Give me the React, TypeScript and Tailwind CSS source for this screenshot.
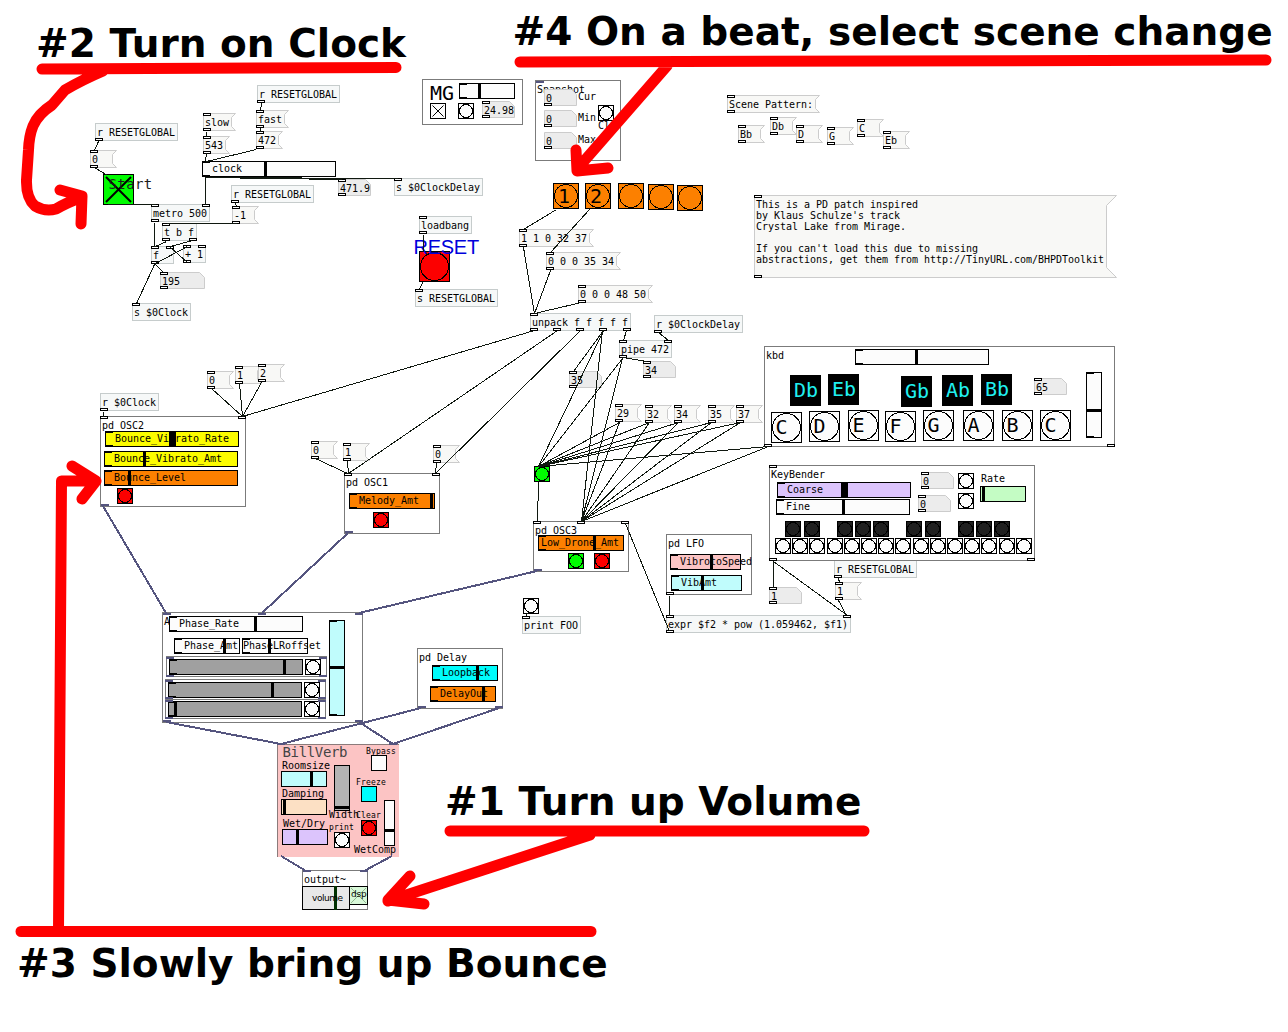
import React from "react";

const SIZES = {
  s: { cls: "text-[8px] leading-[9px] tracking-[0.18px]", up: 7 },
  m: { cls: "text-[10px] leading-[11px] tracking-[-0.02px]", up: 9 },
  l: { cls: "text-[14px] leading-[16px] tracking-[0.4px]", up: 13 },
  lt: { cls: "text-[14px] leading-[16px] tracking-[-0.35px]", up: 13 },
  xl: { cls: "text-[20px] leading-[24px]", up: 19 },
};

type Size = keyof typeof SIZES;

/* Free comment on the patch canvas, placed by its baseline. */
function Txt({ x, y, t, size = "m", color = "text-black" }: { x: number; y: number; t: string; size?: Size; color?: string }) {
  const s = SIZES[size];
  return (
    <span className={`absolute whitespace-pre ${s.cls} ${color}`} style={{ left: x, top: y - s.up }}>
      {t}
    </span>
  );
}

/* Default 10px label that sits in the flow of its box. */
function Label({ t }: { t: string }) {
  return <span className="relative text-[10px] leading-[11px] tracking-[-0.02px] whitespace-pre text-black">{t}</span>;
}

function Heading({ x, y, t }: { x: number; y: number; t: string }) {
  return (
    <h2
      className="absolute flex gap-[13.57px] font-['DejaVu_Sans',sans-serif] text-[39px] leading-[45px] font-bold whitespace-pre text-black"
      style={{ left: x, top: y - 36 }}
    >
      {t.split(" ").map((word, i) => <span key={i}>{word}</span>)}
    </h2>
  );
}

function Port({ x, y }: { x: number; y: number }) {
  return <i className="absolute h-[3px] w-2 border border-black bg-white" style={{ left: x, top: y }} />;
}

function SigPort({ x, y }: { x: number; y: number }) {
  return <i className="absolute h-[2px] w-2 bg-[#55557f]" style={{ left: x, top: y }} />;
}

type BoxDef = [x: number, y: number, text: string, ins?: number[], outs?: number[]];

function Obj({ d: [x, y, t, ins = [], outs = []] }: { d: BoxDef }) {
  return (
    <div
      className="absolute flex h-[18px] min-w-[23px] items-start border border-[#c6cccc] bg-[#f6f8f8] pt-[3px] pr-0.5 pl-px"
      style={{ left: x, top: y }}
    >
      {ins.map((p) => <Port key={`i${p}`} x={p - x - 1} y={-1} />)}
      {outs.map((p) => <Port key={`o${p}`} x={p - x - 1} y={14} />)}
      <Label t={t} />
    </div>
  );
}

function Msg({ x, y, t, w, h = 17, flag = 4 }: { x: number; y: number; t: string; w?: number; h?: number; flag?: number }) {
  const iw = w ?? Math.max(t.length * 6, 18) + 4;
  return (
    <div className="absolute flex items-start pt-1 pl-0.5" style={{ left: x, top: y }}>
      <svg className="absolute top-0 left-0" width={iw + flag + 1} height={h + 1}>
        <path
          d={`M.5 .5H${iw + flag + 0.5}L${iw + 0.5} ${flag + 0.5}V${h - flag + 0.5}L${iw + flag + 0.5} ${h + 0.5}H.5Z`}
          fill="#f8f8f6"
          stroke="#cccccc"
        />
      </svg>
      <Port x={0} y={0} />
      <Port x={0} y={h - 2} />
      <Label t={t} />
    </div>
  );
}

function Num({ x, y, t, w = 32, top = true }: { x: number; y: number; t: string; w?: number; top?: boolean }) {
  return (
    <div className="absolute flex items-start pt-1 pl-0.5" style={{ left: x, top: y }}>
      <svg className="absolute top-0 left-0" width={w + 1} height={17}>
        <path d={`M.5 .5H${w - 4.5}L${w + 0.5} 5.5V16.5H.5Z`} fill="#ececec" stroke="#cccccc" />
      </svg>
      {top && <Port x={0} y={0} />}
      <Port x={0} y={14} />
      <Label t={t} />
    </div>
  );
}

/* Slider; `k` is the knob's offset from the slider's own edge. In flow when it has no position. */
function Slider({ x, y, w, h = 16, k, kw = 3, bg = "bg-[#fcfcfc]", label, pad = "pl-[9px]", cls = "", marks = true, vertical = false }: {
  x?: number; y?: number; w: number; h?: number; k: number; kw?: number; bg?: string; label?: string; pad?: string; cls?: string; marks?: boolean; vertical?: boolean;
}) {
  const free = x !== undefined;
  return (
    <div
      className={`${free ? "absolute" : "relative"} flex shrink-0 items-start border border-black pt-px ${pad} ${bg} ${cls}`}
      style={free ? { left: x, top: y, width: w, height: h } : { width: w, height: h }}
    >
      {marks && <i className="absolute -top-px -left-px h-[2px] w-2 bg-black" />}
      {marks && <i className="absolute -bottom-px -left-px h-[2px] w-2 bg-black" />}
      {label && <Label t={label} />}
      <i
        className="absolute bg-black"
        style={vertical ? { left: -1, top: k - 1, width: w, height: kw } : { left: k - 1, top: -1, width: kw, height: h }}
      />
    </div>
  );
}

/* Bang button: in flow when it has no position of its own. */
function Bang({ x, y, s = 16, fill = "#fcfcfc", cls = "" }: { x?: number; y?: number; s?: number; fill?: string; cls?: string }) {
  const free = x !== undefined;
  return (
    <svg className={`${free ? "absolute" : "shrink-0"} ${cls}`} style={free ? { left: x, top: y } : undefined} width={s} height={s} shapeRendering="crispEdges">
      <rect x=".5" y=".5" width={s - 1} height={s - 1} fill={fill} stroke="#000" />
      <circle cx={s / 2} cy={s / 2} r={s / 2 - 1.5} fill={fill} stroke="#000" />
    </svg>
  );
}

function Toggle({ x, y, s, fill, sw = 1 }: { x: number; y: number; s: number; fill: string; sw?: number }) {
  const a = 2 + sw / 2;
  const b = s - a;
  return (
    <svg className="absolute" style={{ left: x, top: y }} width={s} height={s}>
      <rect x=".5" y=".5" width={s - 1} height={s - 1} fill={fill} stroke="#000" />
      <path d={`M${a} ${a}L${b} ${b}M${b} ${a}L${a} ${b}`} stroke="#000" strokeWidth={sw} />
    </svg>
  );
}

/* Graph-on-parent frame: a titled column of controls. */
function Gop({ x, y, w, h, title, children }: { x: number; y: number; w: number; h: number; title?: string; children?: React.ReactNode }) {
  return (
    <section
      className="absolute flex flex-col items-start border border-[#7b7b7b] bg-white pt-[3px] pl-px"
      style={{ left: x, top: y, width: w, height: h }}
    >
      {title && <Label t={title} />}
      {children}
    </section>
  );
}

/* Row frame with a gray slider and a bang. */
function FaderRow({ x, y, h = 21, k, pt = "pt-0.5" }: { x: number; y: number; h?: number; k: number; pt?: string }) {
  return (
    <section className={`absolute flex w-[161px] items-start gap-0.5 border border-[#7b7b7b] bg-white pl-0.5 ${pt}`} style={{ left: x, top: y, height: h }}>
      <Slider w={134} k={k} bg="bg-[#a0a0a0]" />
      <Bang />
    </section>
  );
}

const OBJECTS: BoxDef[] = [
  [95, 123, "r RESETGLOBAL", [], [95]],
  [257, 85, "r RESETGLOBAL", [], [257]],
  [231, 185, "r RESETGLOBAL", [], [231]],
  [151, 204, "metro 500", [151, 202], [151]],
  [162, 223, "t b f", [162], [162, 189]],
  [151, 246, "f", [151, 166], [151]],
  [183, 245, "+ 1", [183, 198], [183]],
  [132, 303, "s $0Clock", [132]],
  [394, 178, "s $0ClockDelay", [394]],
  [419, 216, "loadbang", [419], [419]],
  [415, 289, "s RESETGLOBAL", [415]],
  [530, 313, "unpack f f f f f", [530], [530, 553, 576, 599, 623]],
  [654, 315, "r $0ClockDelay", [], [654]],
  [619, 340, "pipe 472", [619, 664], [619]],
  [100, 393, "r $0Clock", [], [100]],
  [522, 616, "print FOO", [522]],
  [666, 615, "expr $f2 * pow (1.059462, $f1)", [666, 843], [666]],
];

const MESSAGES: [number, number, string][] = [
  [203, 113, "slow"], [203, 136, "543"], [256, 110, "fast"], [256, 131, "472"], [90, 150, "0"], [232, 206, "-1"],
  [519, 229, "1 1 0 32 37"], [546, 252, "0 0 0 35 34"], [578, 285, "0 0 0 48 50"],
  [727, 95, "Scene Pattern:"], [738, 125, "Bb"], [770, 117, "Db"], [796, 125, "D"], [827, 127, "G"], [857, 119, "C"], [883, 131, "Eb"],
  [207, 371, "0"], [235, 366, "1"], [258, 364, "2"], [311, 441, "0"], [343, 443, "1"], [433, 445, "0"],
  [615, 404, "29"], [645, 405, "32"], [674, 405, "34"], [708, 405, "35"], [736, 405, "37"], [835, 582, "1"],
];

const NOTE = [
  "This is a PD patch inspired",
  "by Klaus Schulze's track",
  "Crystal Lake from Mirage.",
  "",
  "If you can't load this due to missing",
  "abstractions, get them from http://TinyURL.com/BHPDToolkit",
].join("\n");

type Line = [number, number, number, number];

const WIRES: Line[] = [
  [98, 141, 94, 150], [94, 167, 107, 175], [107, 204, 155, 204], [154, 222, 154, 246], [205, 177, 205, 204],
  [235, 203, 236, 206], [236, 223, 166, 223], [166, 241, 155, 246], [192, 240, 170, 246], [155, 263, 187, 246],
  [187, 262, 170, 247], [155, 264, 163, 272], [154, 264, 136, 303], [206, 131, 206, 136], [206, 153, 205, 161],
  [261, 103, 260, 110], [260, 127, 260, 131], [256, 149, 206, 161], [205, 177, 342, 179], [205, 177, 398, 178],
  [423, 234, 423, 251], [422, 282, 419, 289], [556, 209, 523, 229], [589, 209, 550, 252], [523, 247, 534, 313],
  [550, 270, 534, 313], [581, 302, 534, 313], [534, 330, 242, 416], [557, 330, 348, 473], [580, 330, 435, 473],
  [603, 330, 573, 371], [603, 330, 538, 466], [602, 330, 581, 521], [626, 330, 623, 340], [658, 332, 668, 340],
  [622, 358, 538, 466], [622, 358, 581, 521], [622, 357, 647, 361],
  [619, 422, 538, 466], [649, 422, 538, 466], [678, 422, 538, 466], [711, 422, 538, 466], [740, 422, 538, 466], [768, 446, 538, 466],
  [619, 422, 581, 521], [649, 422, 581, 521], [678, 422, 581, 521], [711, 422, 581, 521], [740, 422, 581, 521], [768, 446, 581, 521],
  [538, 482, 537, 521], [625, 523, 669, 631], [527, 613, 525, 616], [669, 595, 669, 615], [773, 561, 773, 587],
  [773, 561, 847, 615], [838, 578, 839, 582], [838, 600, 846, 615], [103, 411, 103, 416], [211, 388, 242, 416],
  [239, 383, 242, 416], [261, 382, 242, 416], [315, 458, 347, 473], [347, 461, 348, 473], [436, 463, 435, 473],
];

const SIGNALS: Line[] = [
  [103, 506, 166, 613], [348, 533, 262, 613], [537, 571, 359, 613], [166, 722, 281, 744], [359, 722, 393, 744],
  [421, 708, 281, 744], [499, 708, 393, 744], [281, 856, 306, 871], [392, 856, 364, 871],
];

const SIG_PORTS: [number, number][] = [
  [536, 81], [101, 504], [345, 531], [534, 569], [163, 613], [258, 613], [355, 613], [163, 720], [355, 720],
  [418, 706], [495, 706], [277, 743], [389, 743], [303, 870], [360, 870],
  [166, 657], [319, 657], [166, 675], [319, 675], [165, 680], [318, 680], [165, 697], [318, 697], [165, 700], [318, 700], [165, 717], [318, 717],
];

const PORTS: [number, number][] = [
  [100, 416], [238, 416], [344, 473], [432, 473], [533, 521], [577, 521], [621, 521], [666, 592],
  [764, 444], [1107, 444], [769, 465], [769, 558], [1027, 558],
];

const SCENES: [number, number, string][] = [[553, 183, "1"], [585, 183, "2"], [618, 183, ""], [648, 184, ""], [677, 185, ""]];

const BLACK_KEYS: [number, number, string][] = [[790, 375, "Db"], [828, 374, "Eb"], [901, 376, "Gb"], [942, 375, "Ab"], [981, 374, "Bb"]];
const WHITE_KEYS: [number, number, string][] = [
  [771, 412, "C"], [809, 411, "D"], [848, 410, "E"], [885, 411, "F"], [923, 410, "G"], [963, 410, "A"], [1002, 410, "B"], [1040, 410, "C"],
];

const ORANGE = "bg-[#fc8000]";
const YELLOW = "bg-[#fcfc00]";
const ICE = "bg-[#c0fcfc]";
const LILAC = "bg-[#dcc4fc]";

/* Two octaves of small pitch-bend keys. */
function BendKeys() {
  return (
    <div className="absolute top-[521px] left-[775px] flex w-[257px] flex-col gap-px">
      <div className="flex gap-[17px] pl-2.5">
        {[2, 3, 2, 3].map((n, g) => (
          <div key={g} className={n === 2 ? "flex gap-[3px]" : "flex gap-0.5"}>
            {Array.from({ length: n }, (_, i) => <Bang key={i} fill="#202020" />)}
          </div>
        ))}
      </div>
      <div className="flex justify-between">
        {Array.from({ length: 15 }, (_, i) => <Bang key={i} />)}
      </div>
    </div>
  );
}

function Monitors() {
  return (
    <>
      <Gop x={422} y={79} w={101} h={46} />
      <Txt x={430} y={100} t="MG" size="xl" />
      <Slider x={459} y={83} w={56} k={19} />
      <Toggle x={430} y={103} s={16} fill="#fcfcfc" />
      <Bang x={458} y={103} />
      <Num x={482} y={101} t="24.98" />

      <Gop x={535} y={80} w={86} h={81} title="Snapshot" />
      {[89, 110, 132].map((y) => <Num key={y} x={544} y={y} t="0" top={false} />)}
      <Txt x={578} y={100} t="Cur" />
      <Txt x={578} y={121} t="Min" />
      <Txt x={578} y={143} t="Max" />
      <Txt x={598} y={129} t="Clr" />
      <Bang x={598} y={105} />
    </>
  );
}

function Voices() {
  return (
    <>
      <Gop x={100} y={416} w={146} h={91} title="pd OSC2">
        <Slider w={134} k={64} kw={7} bg={YELLOW} label="Bounce_Vibrato_Rate" cls="ml-[3px]" />
        <Slider w={134} k={39} bg={YELLOW} label="Bounce_Vibrato_Amt" cls="mt-1 ml-0.5" />
        <Slider w={134} k={24} bg={ORANGE} label="Bounce_Level" cls="mt-[3px] ml-0.5" />
        <Bang fill="#fc0000" cls="mt-0.5 ml-[15px]" />
      </Gop>

      <Gop x={344} y={473} w={96} h={61} title="pd OSC1">
        <Slider w={86} k={81} bg={ORANGE} label="Melody_Amt" cls="mt-[5px] ml-[3px]" />
        <Bang fill="#fc0000" cls="mt-[3px] ml-[27px]" />
      </Gop>

      <Gop x={533} y={521} w={96} h={51} title="pd OSC3">
        <Slider w={86} k={55} bg={ORANGE} label="Low_Drone_Amt" pad="pl-0.5" cls="-mt-px ml-[3px]" />
        <div className="mt-0.5 ml-[33px] flex gap-2.5">
          <Bang fill="#00fc00" />
          <Bang fill="#fc0000" />
        </div>
      </Gop>

      <Gop x={666} y={534} w={86} h={61} title="pd LFO">
        <Slider w={71} k={40} bg="bg-[#fcc4c4]" label="VibrotoSpeed" cls="mt-[5px] ml-0.5" />
        <Slider w={71} k={30} bg={ICE} label="VibAmt" cls="mt-[5px] ml-[3px]" />
      </Gop>

      <Gop x={417} y={648} w={86} h={61} title="pd Delay">
        <Slider w={66} k={44} bg="bg-[#00fcfc]" label="Loopback" cls="mt-0.5 ml-[13px]" />
        <Slider w={66} k={52} bg={ORANGE} label="DelayOut" cls="mt-[5px] ml-[11px]" />
      </Gop>

      <Gop x={162} y={612} w={201} h={111} title="A" />
      <Slider x={169} y={616} w={134} k={85} label="Phase_Rate" />
      <Slider x={174} y={638} w={66} k={49} label="Phase_Amt" />
      <Slider x={242} y={638} w={66} k={26} label="PhaseLRoffset" pad="pl-0" />
      <Slider x={329} y={620} w={16} h={96} k={46} bg={ICE} vertical />
      <FaderRow x={166} y={656} k={114} />
      <FaderRow x={165} y={679} k={103} />
      <FaderRow x={165} y={699} h={20} k={6} pt="pt-px" />
    </>
  );
}

function Keyboards() {
  return (
    <>
      <Gop x={764} y={346} w={351} h={101} title="kbd" />
      <Slider x={855} y={349} w={134} k={60} />
      <Slider x={1086} y={372} w={16} h={66} k={37} vertical />
      <Num x={1034} y={378} t="65" />
      {BLACK_KEYS.map(([x, y, t]) => (
        <div key={x} className="absolute flex size-[31px] items-start bg-black pt-[3px] pl-1" style={{ left: x, top: y }}>
          <span className="text-[20px] leading-[24px] text-[#20f0f0]">{t}</span>
        </div>
      ))}
      {WHITE_KEYS.map(([x, y, t]) => (
        <div key={x} className="absolute flex size-[31px] items-start pt-[3px] pl-[4.5px]" style={{ left: x, top: y }}>
          <Bang x={0} y={0} s={31} />
          <span className="relative text-[20px] leading-[24px] text-black">{t}</span>
        </div>
      ))}

      <Obj d={[834, 560, "r RESETGLOBAL", [], [834]]} />
      <Gop x={769} y={465} w={266} h={96} title="KeyBender" />
      <Slider x={777} y={482} w={134} k={64} kw={7} bg={LILAC} label="Coarse" />
      <Slider x={776} y={499} w={134} k={66} label="Fine" />
      <Num x={921} y={472} t="0" />
      <Num x={918} y={495} t="0" />
      <div className="absolute top-[473px] left-[958px] flex flex-col gap-1">
        <Bang />
        <Bang />
      </div>
      <div className="absolute top-[473px] left-[980px] flex flex-col gap-0.5">
        <div className="flex pl-px">
          <Label t="Rate" />
        </div>
        <Slider w={46} k={2} bg="bg-[#c4fcc4]" marks={false} />
      </div>
      <BendKeys />
    </>
  );
}

function Reverb() {
  return (
    <>
      <div className="absolute top-[744px] left-[277px] h-[113px] w-[122px] border-t border-l border-[#8b7b7b] bg-[#fcc4c4]" />
      <Txt x={282.5} y={757} t="BillVerb" size="lt" color="text-[#444444]" />
      <div className="absolute top-[760px] left-[281px] flex flex-col items-start">
        <div className="flex pl-px"><Label t="Roomsize" /></div>
        <Slider w={46} k={29} bg={ICE} marks={false} />
        <div className="mt-px flex pl-px"><Label t="Damping" /></div>
        <Slider w={46} k={2} bg="bg-[#fce0c4]" marks={false} />
        <div className="mt-[3px] flex pl-0.5"><Label t="Wet/Dry" /></div>
        <Slider w={46} k={14} bg={LILAC} marks={false} cls="ml-px" />
      </div>
      <Slider x={334} y={765} w={16} h={46} k={41} bg="bg-[#b4b4b4]" marks={false} vertical />
      <Slider x={384} y={800} w={11} h={46} k={29} vertical marks={false} />
      <Txt x={329} y={818} t="Width" />
      <Txt x={329} y={830} t="print" size="s" />
      <Bang x={334} y={832} />
      <Txt x={366} y={754} t="Bypass" size="s" />
      <div className="absolute top-[755px] left-[371px] size-4 border border-black bg-[#fcfcfc]" />
      <Txt x={356} y={785} t="Freeze" size="s" />
      <div className="absolute top-[786px] left-[361px] size-4 border border-black bg-[#00fcfc]" />
      <Txt x={356} y={818} t="Clear" size="s" />
      <Bang x={361} y={820} fill="#fc0000" />
      <Txt x={354} y={853} t="WetComp" />

      <Gop x={302} y={870} w={66} h={40} title="output~" />
      <div className="absolute top-[886px] left-[302px] flex font-['DejaVu_Sans',sans-serif] text-[9px] leading-[11px] text-black">
        <div className="relative flex h-6 w-12 items-start border border-black bg-[#e8e8e8] pt-1.5 pl-[9px]">
          <i className="absolute -top-px left-[31px] h-6 w-[3px] bg-[#003000]" />
          <span className="relative tracking-[-0.45px]">volume</span>
        </div>
        <div className="relative -ml-px flex size-[19px] items-start border border-black bg-[#d8f8d8] pt-0.5 pl-px">
          <svg className="absolute top-0 left-0" width="17" height="17">
            <path d="M1 1L16 16M16 1L1 16" stroke="#90b890" />
          </svg>
          <span className="relative tracking-[-0.2px]">dsp</span>
        </div>
      </div>
    </>
  );
}

export default function App() {
  return (
    <main className="relative h-[1032px] w-[1288px] overflow-hidden bg-white font-['DejaVu_Sans_Mono',monospace]">
      {OBJECTS.map((d, i) => <Obj key={i} d={d} />)}
      {MESSAGES.map(([x, y, t], i) => <Msg key={i} x={x} y={y} t={t} />)}
      <Msg x={754} y={195} w={352} h={82} flag={10} t={NOTE} />
      <Num x={338} y={179} t="471.9" />
      <Num x={160} y={272} t="195" w={44} />
      <Num x={643} y={361} t="34" />
      <Num x={569} y={371} t="35" />
      <Num x={769} y={587} t="1" />

      <Slider x={202} y={161} w={134} k={62} label="clock" />
      <Toggle x={103} y={174} s={31} fill="#00fc00" sw={2} />
      <Txt x={108.5} y={189} t="Start" size="l" color="text-[#1c1c1c]" />

      {SCENES.map(([x, y, t]) => (
        <div key={x} className="absolute flex size-[26px] items-start pt-px pl-[5px]" style={{ left: x, top: y }}>
          <Bang x={0} y={0} s={26} fill="#fc8000" />
          <span className="relative text-[20px] leading-[24px] text-black">{t}</span>
        </div>
      ))}

      <Bang x={419} y={251} s={31} fill="#fc0000" />
      <span className="absolute top-[236px] left-[413.5px] font-['Liberation_Sans',sans-serif] text-[20px] leading-[22px] tracking-[-0.25px] text-[#0000dc]">RESET</span>

      <Bang x={534} y={466} fill="#00fc00" />
      <Bang x={523} y={598} />

      <Monitors />
      <Voices />
      <Keyboards />
      <Reverb />
      {PORTS.map(([x, y], i) => <Port key={i} x={x} y={y} />)}
      {SIG_PORTS.map(([x, y], i) => <SigPort key={i} x={x} y={y} />)}

      <svg className="pointer-events-none absolute inset-0" width="1288" height="1032" fill="none">
        <g stroke="#101810" shapeRendering="crispEdges">
          {WIRES.map(([a, b, c, d], i) => <line key={i} x1={a + 0.5} y1={b + 0.5} x2={c + 0.5} y2={d + 0.5} />)}
        </g>
        <g stroke="#55557f" strokeWidth="2" shapeRendering="crispEdges">
          {SIGNALS.map(([a, b, c, d], i) => <line key={i} x1={a} y1={b} x2={c} y2={d} />)}
        </g>
        <g stroke="#ff0000" strokeWidth="11" strokeLinecap="round" strokeLinejoin="round">
          <path d="M42 69L396 67.500M103 71Q82 80 65 90L52 105Q38 114 33 126Q29 136 28.500 150L26.500 180Q26 198 35 206Q45 212 56 209Q66 203 82 197M60 190L82 196L81 224" />
          <path d="M520 62L1266 60M667 66L578 168M576 150L577 171L608 168" />
          <path d="M450 831H864M590 835L388 901M410 876L388 900L424 904" />
          <path d="M21 931.500H591M58.500 931L61.500 481H93M72 466L96 481L82 499" />
        </g>
      </svg>

      <Heading x={36} y={57} t="#2 Turn on Clock" />
      <Heading x={512.5} y={45} t="#4 On a beat, select scene change" />
      <Heading x={445} y={815} t="#1 Turn up Volume" />
      <Heading x={17} y={977} t="#3 Slowly bring up Bounce" />
    </main>
  );
}
